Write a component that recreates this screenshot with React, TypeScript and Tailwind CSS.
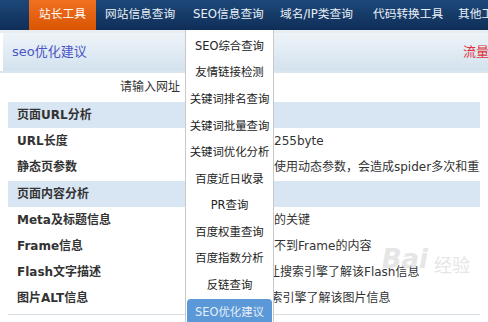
import React from "react";

const F = { fontFamily: '"DejaVu Sans", "Noto Sans CJK SC", sans-serif' };

const navItems = [
  { t: "网站信息查询", w: "w-[88px]" },
  { t: "SEO信息查询", w: "w-[87px]" },
  { t: "域名/IP类查询", w: "w-[93px]" },
  { t: "代码转换工具", w: "w-[85px]" },
  { t: "其他工具", w: "w-[80px]" },
];

const menu = [
  "SEO综合查询",
  "友情链接检测",
  "关键词排名查询",
  "关键词批量查询",
  "关键词优化分析",
  "百度近日收录",
  "PR查询",
  "百度权重查询",
  "百度指数分析",
  "反链查询",
];

function Row({ label, value, shift }: { label: string; value: string; shift?: boolean }) {
  return (
    <div className="h-[26px] flex items-center overflow-hidden">
      <div
        className={`${shift ? "w-[200px]" : "w-[194px]"} shrink-0 pl-[9px] font-bold text-[12px] text-[#333] whitespace-nowrap`}
      >
        {label}
      </div>
      <div className="text-[12px] text-[#333] whitespace-nowrap">{value}</div>
    </div>
  );
}

function Head({ label }: { label: string }) {
  return (
    <div className="h-[26px] mt-[1px] flex items-center bg-[#d8e5f3] pl-[9px] font-bold text-[12px] text-[#333]">
      {label}
    </div>
  );
}

export default function App() {
  return (
    <div className="relative w-[488px] h-[322px] overflow-hidden bg-white" style={F}>
      <div className="h-[30px] flex pl-[29px] overflow-hidden bg-gradient-to-b from-[#1e4879] to-[#0f2e58] text-[11.7px] text-[#eaf0f7] whitespace-nowrap">
        <div className="w-[67px] shrink-0 h-full flex items-center justify-center bg-gradient-to-b from-[#f07020] to-[#d95500] text-white">
          站长工具
        </div>
        {navItems.map((n) => (
          <div key={n.t} className={`${n.w} shrink-0 h-full flex items-center pl-[9px]`}>
            {n.t}
          </div>
        ))}
      </div>
      <div className="h-[3px] bg-[#e8edf2]" />
      <div className="h-[38px] ml-[3px] flex items-center justify-between pl-[9px] bg-gradient-to-b from-[#eef4f9] to-[#d3e2ee] whitespace-nowrap">
        <span className="text-[13px] text-[#4a55c6]">seo优化建议</span>
        <span className="text-[13px] text-[#e0303a] w-[25px] overflow-hidden">流量统计</span>
      </div>
      <div className="h-[2px] bg-[#dde5ec]" />
      <div className="px-[8px]">
        <div className="h-[28px] flex items-center">
          <div className="w-[172px] text-right text-[12px] text-[#333]">请输入网址</div>
        </div>
        <Head label="页面URL分析" />
        <Row label="URL长度" value="长度最好小于255byte" />
        <Row label="静态页参数" value="网址尽量不要使用动态参数，会造成spider多次和重复抓取" />
        <Head label="页面内容分析" />
        <Row label="Meta及标题信息" value="标题包含页面的关键" />
        <Row label="Frame信息" value="搜索引擎抓取不到Frame的内容" />
        <Row label="Flash文字描述" value="添加描述能让搜索引擎了解该Flash信息" shift />
        <Row label="图片ALT信息" value="添加ALT让搜索引擎了解该图片信息" />
        <div className="h-[3px]" />
        <div className="h-[1px] bg-[#d5dde5]" />
      </div>
      <div className="absolute right-[18px] top-[240px] flex items-end gap-[6px] text-[#e6e6e6] select-none">
        <span className="text-[26px] font-bold italic">Bai</span>
        <span className="text-[18px]">经验</span>
      </div>
      <div className="absolute left-[185px] top-[30px] w-[89px] bottom-0 bg-white border-x border-[#c9c9c9] pt-[3px] px-[1px]">
        {menu.map((m) => (
          <div key={m} className="h-[26.6px] flex items-center justify-center text-[11.4px] text-[#222] whitespace-nowrap">
            {m}
          </div>
        ))}
        <div className="h-[26.6px] flex items-center justify-center text-[11.4px] text-[#e6eef8] bg-[#5b98d7] rounded-t-[4px] whitespace-nowrap">
          SEO优化建议
        </div>
      </div>
    </div>
  );
}
